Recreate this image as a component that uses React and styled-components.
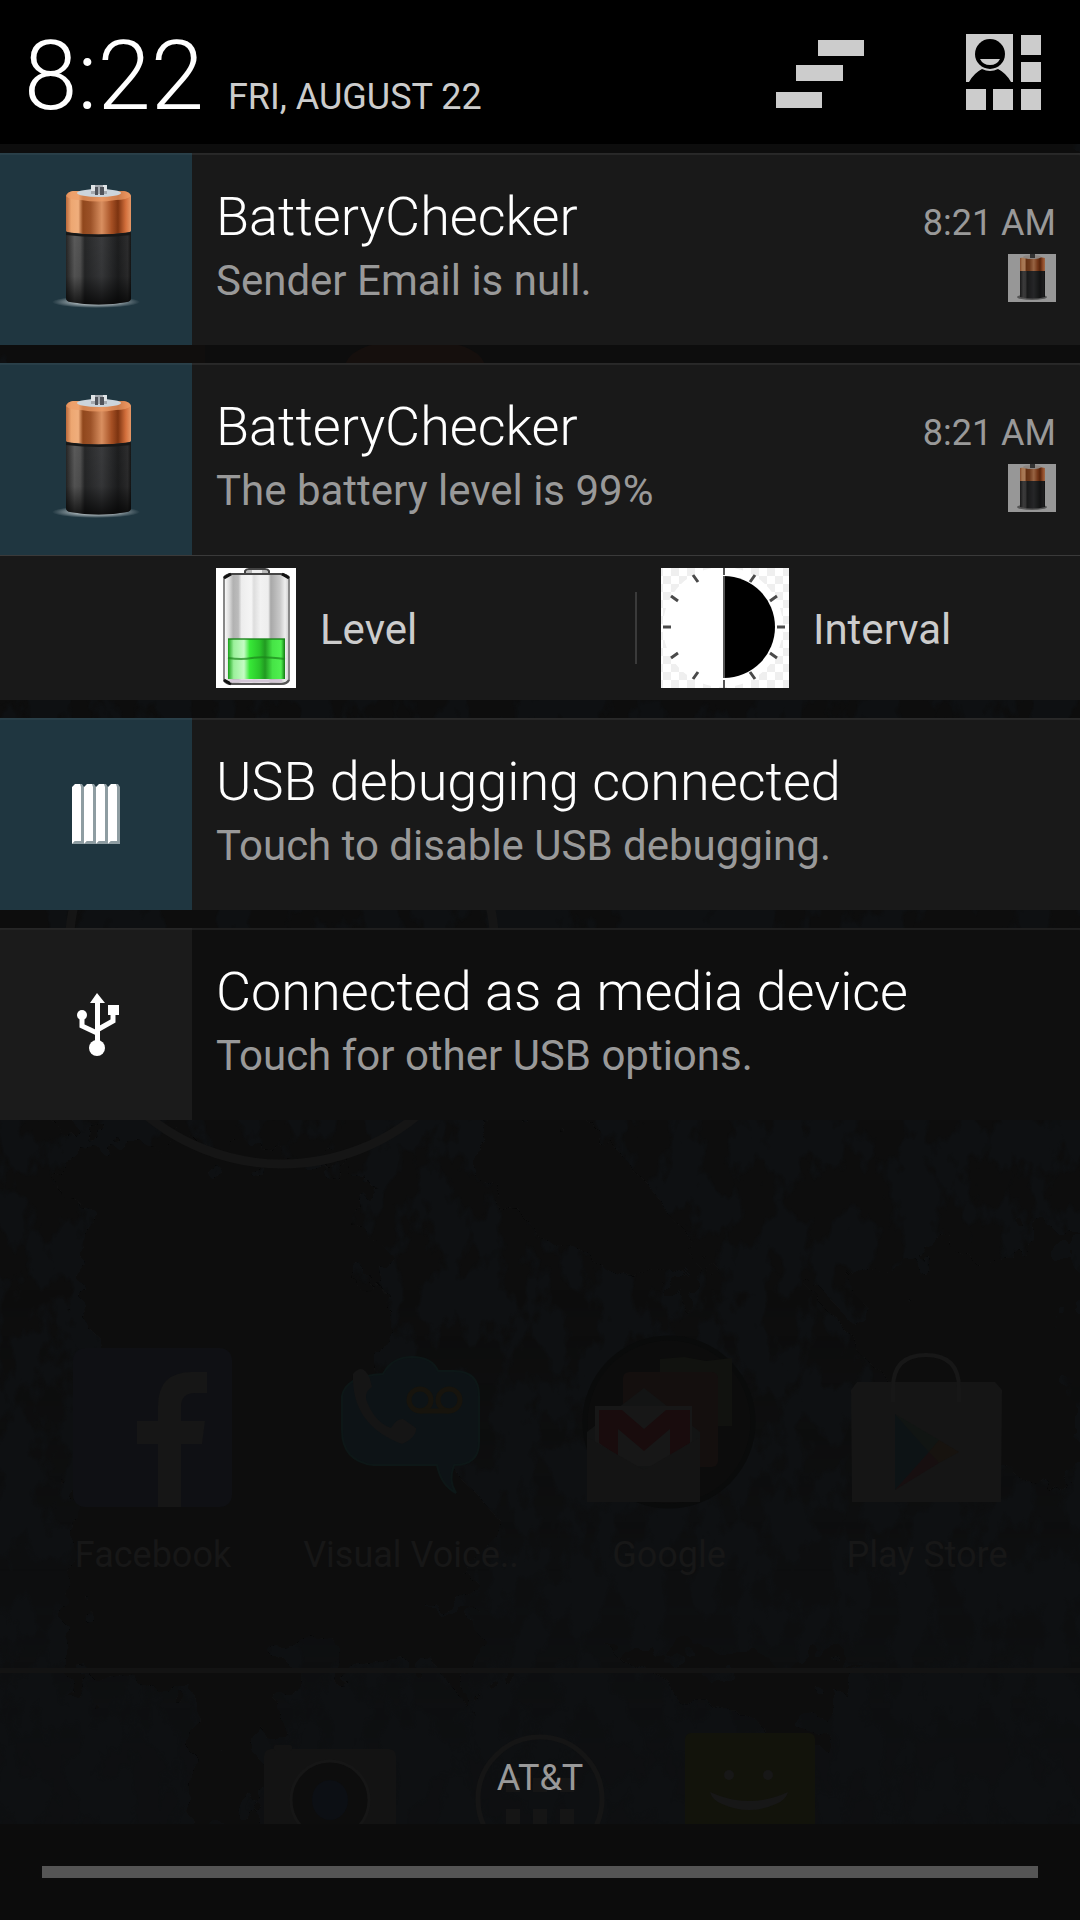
import React from "react";
import styled, { createGlobalStyle } from "styled-components";

const GlobalStyle = createGlobalStyle`
  *, *::before, *::after { box-sizing: border-box; }
  body {
    margin: 0;
    background: #0d0e0f;
    color: #fff;
    font-family: Roboto, "Noto Sans", sans-serif;
  }
  button { border: 0; background: none; color: inherit; font: inherit; cursor: pointer; }
  h2, p, ul { margin: 0; padding: 0; }
  svg { display: block; flex: none; }
`;

const Screen = styled.div`
  display: grid;
  min-height: 100vh;
  overflow: hidden;
`;

/* ---------- home screen, dimmed behind the shade ---------- */

const Home = styled.div`
  grid-area: 1 / 1;
  position: relative;
  display: flex;
  flex-direction: column;
  justify-content: flex-end;
  padding-bottom: 96px;
  background: #0e1012;
`;

const WallpaperArt = styled.svg`
  position: absolute;
  inset: 0;
  width: 100%;
  height: 100%;
`;

const AppGrid = styled.ul`
  position: relative;
  display: grid;
  grid-template-columns: repeat(4, 1fr);
  padding: 0 24px 92px;
  list-style: none;
`;

const AppCell = styled.li`
  display: flex;
  flex-direction: column;
  align-items: center;
  gap: 24px;
  color: #171717;
  font-size: 36px;
  line-height: 42px;
  white-space: nowrap;
`;

const Dock = styled.div`
  position: relative;
  display: grid;
  grid-template-columns: repeat(5, 1fr);
  justify-items: center;
  height: 156px;
  padding: 60px 16px 0;
  border-top: 5px solid #131313;
  overflow: hidden;

  & > :first-child { grid-column-start: 2; }
`;

/* ---------- notification shade ---------- */

const Shade = styled.main`
  grid-area: 1 / 1;
  position: relative;
  display: flex;
  flex-direction: column;
`;

const Header = styled.header`
  display: flex;
  align-items: stretch;
  height: 144px;
  background: #000;
`;

const DateTime = styled.div`
  flex: 1;
  display: flex;
  align-items: baseline;
  gap: 24px;
  padding: 20px 0 0 24px;
`;

const Clock = styled.time`
  font-size: 96px;
  font-weight: 300;
  line-height: 112px;
`;

const DateText = styled.span`
  color: #ccc;
  font-size: 36px;
  line-height: 42px;
`;

const HeaderButton = styled.button`
  display: flex;
  align-items: center;
  padding: 0 ${(p) => p.$pad}px;
`;

const List = styled.ul`
  display: flex;
  flex-direction: column;
  gap: 18px;
  padding-top: 9px;
  list-style: none;
`;

const Card = styled.li`
  background: ${(p) => (p.$ongoing ? "#0f0f0f" : "#191919")};
`;

const CardMain = styled.div`
  display: grid;
  grid-template-columns: 192px 1fr;
  height: 192px;
  box-shadow: inset 0 2px 1px rgba(255, 255, 255, 0.07);
`;

const IconCell = styled.div`
  display: flex;
  align-items: center;
  justify-content: center;
  background: ${(p) => (p.$ongoing ? "#1b1b1b" : "#1f3640")};
  box-shadow: inset 0 2px 1px rgba(255, 255, 255, 0.05);
`;

const CardText = styled.div`
  display: grid;
  grid-template-columns: 1fr auto;
  align-content: start;
  row-gap: 6px;
  padding: 33px 24px 0;
`;

const Title = styled.h2`
  font-size: 54px;
  font-weight: 300;
  line-height: 62px;
`;

const Time = styled.time`
  color: #999;
  font-size: 36px;
  line-height: 42px;
`;

const TitleLine = styled.div`
  grid-column: 1 / -1;
  display: flex;
  align-items: baseline;
  justify-content: space-between;
`;

const Message = styled.p`
  color: #999;
  font-size: 42px;
  line-height: 54px;
`;

const Actions = styled.div`
  display: flex;
  align-items: center;
  height: 145px;
  padding-left: 192px;
  border-top: 1px solid #3a3a3a;
`;

const ActionButton = styled.button`
  flex: 1 1 0;
  display: flex;
  align-items: center;
  gap: 24px;
  height: 144px;
  padding: 0 24px;
`;

const ActionLabel = styled.span`
  padding-top: 3px;
  color: #ccc;
  font-size: 42px;
  line-height: 54px;
`;

const Divider = styled.span`
  width: 2px;
  height: 72px;
  background: #3a3a3a;
`;

const Footer = styled.footer`
  margin-top: auto;
`;

const Carrier = styled.p`
  padding-bottom: 25px;
  color: #999;
  font-size: 36px;
  line-height: 42px;
  text-align: center;
`;

const HandleArea = styled.div`
  display: flex;
  align-items: center;
  height: 96px;
  padding: 0 42px;
  background: #0c0c0c;
`;

const Handle = styled.button`
  flex: 1;
  height: 12px;
  padding: 0;
  background: #555;
`;

/* ---------- drawings ---------- */

const HiddenDefs = styled.svg`
  position: absolute;
`;

const Gradients = () => (
  <HiddenDefs width="0" height="0" aria-hidden="true">
    <defs>
      <linearGradient id="copper">
        <stop offset="0" stopColor="#b9683a" />
        <stop offset="0.08" stopColor="#eda772" />
        <stop offset="0.19" stopColor="#f0ae7c" />
        <stop offset="0.26" stopColor="#90471c" />
        <stop offset="0.38" stopColor="#9c5228" />
        <stop offset="0.55" stopColor="#d98f60" />
        <stop offset="0.7" stopColor="#a65024" />
        <stop offset="0.8" stopColor="#7c3310" />
        <stop offset="0.92" stopColor="#d36f3c" />
        <stop offset="1" stopColor="#e59766" />
      </linearGradient>
      <linearGradient id="coal">
        <stop offset="0" stopColor="#252525" />
        <stop offset="0.13" stopColor="#5a5a5a" />
        <stop offset="0.22" stopColor="#525252" />
        <stop offset="0.29" stopColor="#262728" />
        <stop offset="0.55" stopColor="#3a3b3d" />
        <stop offset="0.8" stopColor="#1d1e1f" />
        <stop offset="0.95" stopColor="#2d2d2e" />
        <stop offset="1" stopColor="#151515" />
      </linearGradient>
      <linearGradient id="fade" x2="0" y2="1">
        <stop offset="0" stopColor="#000" stopOpacity="0" />
        <stop offset="0.6" stopColor="#000" stopOpacity="0.1" />
        <stop offset="1" stopColor="#000" stopOpacity="0.75" />
      </linearGradient>
      <radialGradient id="glow">
        <stop offset="0.5" stopColor="#9aa6ab" />
        <stop offset="1" stopColor="#9aa6ab" stopOpacity="0" />
      </radialGradient>
      <linearGradient id="silver">
        <stop offset="0" stopColor="#fff" />
        <stop offset="0.08" stopColor="#ddd" />
        <stop offset="0.14" stopColor="#b2b2b2" />
        <stop offset="0.22" stopColor="#bbb" />
        <stop offset="0.27" stopColor="#ededed" />
        <stop offset="0.42" stopColor="#f5f5f5" />
        <stop offset="0.46" stopColor="#ddd" />
        <stop offset="0.56" stopColor="#f2f2f2" />
        <stop offset="0.68" stopColor="#eee" />
        <stop offset="0.72" stopColor="#a8a8a8" />
        <stop offset="0.86" stopColor="#c8c8c8" />
        <stop offset="0.94" stopColor="#eee" />
        <stop offset="1" stopColor="#ccc" />
      </linearGradient>
      <linearGradient id="charge">
        <stop offset="0" stopColor="#17a117" />
        <stop offset="0.1" stopColor="#9bf09b" />
        <stop offset="0.28" stopColor="#c4fcc4" />
        <stop offset="0.38" stopColor="#37e837" />
        <stop offset="0.55" stopColor="#2bc62b" />
        <stop offset="0.65" stopColor="#219a21" />
        <stop offset="0.78" stopColor="#46e446" />
        <stop offset="0.93" stopColor="#4ff04f" />
        <stop offset="1" stopColor="#117811" />
      </linearGradient>
      <pattern id="checker" width="16" height="16" patternUnits="userSpaceOnUse">
        <rect width="16" height="16" fill="#fff" />
        <path d="M2 8h8v8H2zM10 0h6v8h-6zM0 0h2v8H0z" fill="#efefef" />
      </pattern>
    </defs>
  </HiddenDefs>
);

const BatteryIcon = () => (
  <svg width="96" height="128" viewBox="0 0 96 128" aria-hidden="true">
    <ellipse cx="48" cy="117" rx="44" ry="6" fill="url(#glow)" />
    <path d="M18 49h65v64q0 3-4 4q-28 5-57 0q-4-1-4-4z" fill="url(#coal)" />
    <path d="M18 49h65v64q0 3-4 4q-28 5-57 0q-4-1-4-4z" fill="url(#fade)" />
    <path d="M18 11q1-4 7-5h51q6 1 7 5v35q-2 2-8 2q-25 3-49 0q-6 0-8-2z" fill="url(#copper)" />
    <path d="M18 47q32 5 65 0v3q-32 4-65 0z" fill="#171717" />
    <path d="M18 11q1-4 7-5h51q6 1 7 5q-4 4-15 4q-18 3-35 0q-12 0-15-4z" fill="#ee9c66" opacity="0.7" />
    <ellipse cx="51" cy="8" rx="22" ry="4" fill="#ccd5dc" />
    <path d="M43 0h16v9H43z" fill="#a5aab0" />
    <path d="M43 0h4v6h-4zM55 0h4v6h-4z" fill="#dfe3e6" />
    <path d="M47 2h3v8h-3zM52 2h4v8h-4z" fill="#50545b" />
  </svg>
);

const BatteryBadge = () => (
  <svg width="48" height="48" viewBox="0 0 48 48" aria-hidden="true">
    <rect width="48" height="48" fill="#979797" />
    <ellipse cx="24" cy="43" rx="15" ry="3" fill="#555" />
    <path d="M12 17h25v26q-12 3-25 0z" fill="url(#coal)" />
    <path d="M12 17h25v26q-12 3-25 0z" fill="#000" opacity="0.35" />
    <path d="M12 4q12-3 25 0v13H12z" fill="url(#copper)" />
    <path d="M12 4q12-3 25 0v13H12z" fill="#000" opacity="0.3" />
    <ellipse cx="24" cy="3" rx="9" ry="2" fill="#8d8580" />
    <path d="M22 0h5v4h-5z" fill="#333" />
  </svg>
);

const LevelIcon = () => (
  <svg width="80" height="120" viewBox="0 0 80 120" aria-hidden="true">
    <rect width="80" height="120" fill="#fff" />
    <path d="M29 6V3q1-2 4-2h16q3 0 4 2v3z" fill="#bbb" stroke="#444" strokeWidth="2" />
    <path d="M36 2h10v4H36z" fill="#eee" />
    <path d="M8 10q2-4 8-4h48q7 0 9 4v102q-2 4-8 4H16q-6 0-8-4z" fill="url(#silver)" stroke="#888" strokeWidth="2" />
    <path d="M8 10q2-4 8-4h48q7 0 9 4" fill="none" stroke="#444" strokeWidth="2" />
    <path d="M8 112q2 4 8 4h48q7 0 9-4" fill="none" stroke="#555" strokeWidth="2" />
    <path d="M8 10l7-4M73 10l-7-4M8 112l7 4" stroke="#111" strokeWidth="3" />
    <path d="M12 71h57v40H12z" fill="url(#charge)" />
    <path d="M12 71h57M12 90q14 2 24 0t33 1" fill="none" stroke="#1b851b" strokeWidth="2" strokeOpacity="0.7" />
    <path d="M14 113h52" stroke="#d3c6d6" strokeWidth="3" />
  </svg>
);

const IntervalIcon = () => (
  <svg width="128" height="120" viewBox="0 0 128 120" aria-hidden="true">
    <rect width="128" height="120" fill="url(#checker)" />
    <circle cx="62" cy="59" r="60" fill="#fff" />
    <path d="M63 8a51 51 0 0 1 0 102z" fill="#000" />
    <path d="M63 0v7M63 112v8M63 8v102" stroke="#555" strokeWidth="2" />
    <path
      d="M32 7l5 7M94 7l-5 7M10 28l7 5M116 28l-7 5M2 59h8M116 59h8M10 90l7-5M116 90l-7-5M32 111l5-7M94 111l-5-7"
      stroke="#4a4a4a"
      strokeWidth="3"
    />
  </svg>
);

const DebugIcon = () => (
  <svg width="48" height="60" viewBox="0 0 48 60" aria-hidden="true">
    {[0, 12, 24, 36].map((x) => (
      <g key={x} transform={`translate(${x} 0)`}>
        <path d="M8 0h2l2 3v57H0l3-3h6z" fill="#8e9da2" />
        <path d="M0 3l3-3h5l1 3v54H3l-3 3z" fill="#fff" />
      </g>
    ))}
  </svg>
);

const UsbIcon = () => (
  <svg width="48" height="64" viewBox="0 0 48 64" fill="#fff" aria-hidden="true">
    <path d="M25 1l8 10h-5v38h-5V11h-5z" />
    <circle cx="25" cy="56" r="8" />
    <circle cx="10" cy="23" r="5" />
    <path d="M36 13h11v10H36z" />
    <path d="M10 25v9l15 7M41 21v8l-16 9" fill="none" stroke="#fff" strokeWidth="5" />
  </svg>
);

const ClearIcon = () => (
  <svg width="88" height="72" viewBox="0 -4 88 72" fill="#ccc" aria-hidden="true">
    <path d="M42 0h46v16H42zM20 25h47v16H20zM0 52h46v16H0z" />
  </svg>
);

const QuickSettingsIcon = () => (
  <svg width="76" height="76" viewBox="0 0 76 76" fill="#ccc" aria-hidden="true">
    <path d="M0 0h47v48H0z" />
    <path d="M55 1h20v20H55zM55 28h20v20H55zM0 55h20v21H0zM27 55h20v21H27zM55 55h20v21H55z" />
    <path d="M3 48q5-9 13-13q8 4 16 0q8 4 13 13z" fill="#000" />
    <circle cx="24" cy="20" r="15" fill="#000" />
    <path d="M14 25h20q-3 6-10 6t-10-6z" />
  </svg>
);

const FacebookIcon = () => (
  <svg width="176" height="176" viewBox="0 0 176 176" aria-hidden="true">
    <rect x="8" y="14" width="159" height="159" rx="12" fill="#0f1014" />
    <path d="M93 173v-63H72V87h21V72q0-34 34-34h15v21h-12q-14 0-14 14v14h24l-3 23h-21v63z" fill="#161616" />
  </svg>
);

const VoicemailIcon = () => (
  <svg width="176" height="176" viewBox="0 0 176 176" aria-hidden="true">
    <path
      d="M60 40q9-17 29-17t26 14h16q25 0 25 25v46q0 23-25 23q-6 16 2 28q-15-8-19-28H50q-31-4-31-35V62q4-20 41-22z"
      fill="#0d1316"
      stroke="#0d1717"
      strokeWidth="2"
    />
    <path d="M30 40q10-12 17 5l2 8q-7 4-6 12q8 23 25 29q6-10 12-9l13 9q1 9-14 16Q28 91 30 40z" fill="#151515" />
    <g fill="none" stroke="#17140d" strokeWidth="5">
      <circle cx="97" cy="66" r="11" />
      <circle cx="126" cy="66" r="11" />
      <path d="M97 77h29" />
    </g>
  </svg>
);

const GoogleFolderIcon = () => (
  <svg width="176" height="176" viewBox="0 0 176 176" aria-hidden="true">
    <circle cx="88" cy="88" r="84" fill="#0c0c0c" stroke="#0a0b0b" strokeWidth="5" />
    <path d="M79 25l24-2 22 4 26-3v68H79z" fill="#11120f" />
    <rect x="42" y="38" width="95" height="95" rx="6" fill="#140f0e" />
    <path d="M6 98l57-44 56 44v70H6z" fill="#131414" />
    <path d="M14 72h97v60H14z" fill="#171717" />
    <path d="M18 76h23l22 19 22-19h24v33l-20 13V95l-26 22-26-22v27l-19-13z" fill="#190c0d" />
    <path d="M6 103l57 33 56-33v65H6z" fill="#141414" />
  </svg>
);

const PlayStoreIcon = () => (
  <svg width="176" height="176" viewBox="0 0 176 176" aria-hidden="true">
    <path d="M18 48h138l7 8-1 112H13l-1-112z" fill="#151515" />
    <path d="M54 68V54q0-33 33-33t33 33v14" fill="none" stroke="#171717" strokeWidth="4" />
    <path d="M56 80v76l34-38z" fill="#0d1315" />
    <path d="M56 80l34 38 10-12z" fill="#111513" />
    <path d="M100 106l20 12-20 11-10-11z" fill="#17130f" />
    <path d="M56 156l34-38 10 11z" fill="#170f10" />
  </svg>
);

const CameraIcon = () => (
  <svg width="132" height="132" viewBox="0 0 132 132" aria-hidden="true">
    <rect y="16" width="132" height="116" rx="7" fill="#131313" />
    <rect x="10" y="12" width="18" height="6" rx="2" fill="#131313" />
    <circle cx="66" cy="67" r="39" fill="#0d0d0d" stroke="#161616" strokeWidth="3" />
    <ellipse cx="66" cy="67" rx="18" ry="20" fill="#0c0f14" />
  </svg>
);

const AllAppsIcon = () => (
  <svg width="132" height="132" viewBox="0 0 132 132" aria-hidden="true">
    <circle cx="66" cy="66" r="62" fill="none" stroke="#151515" strokeWidth="5" />
    <path
      d="M32 45h14v14H32zM59 45h14v14H59zM86 45h14v14H86zM32 76h14v20H32zM59 76h14v20H59zM86 76h14v20H86z"
      fill="#151515"
    />
  </svg>
);

const MessagesIcon = () => (
  <svg width="132" height="132" viewBox="0 0 132 132" aria-hidden="true">
    <rect x="1" y="0" width="130" height="132" rx="6" fill="#12130b" />
    <ellipse cx="45" cy="42" rx="5" ry="5" fill="#171717" />
    <ellipse cx="84" cy="42" rx="5" ry="5" fill="#171717" />
    <path d="M26 59q39 18 78 0q-2 8-12 12-27 12-54 0-10-4-12-12z" fill="#171717" />
  </svg>
);

const Wallpaper = () => (
  <WallpaperArt viewBox="0 0 1080 1920" preserveAspectRatio="xMidYMax slice" aria-hidden="true">
    <defs>
      <filter id="leaves" x="0" y="0" width="100%" height="100%" colorInterpolationFilters="sRGB">
        <feTurbulence type="fractalNoise" baseFrequency="0.03 0.018" numOctaves="4" seed="8" />
        <feColorMatrix values="0 0 0 0 0.05  0 0 0 0 0.05  0 0 0 0 0.05  10 0 0 0 -4.7" result="n" />
        <feComposite in="n" in2="SourceGraphic" operator="in" />
      </filter>
      <filter id="soften" x="-20%" y="-20%" width="140%" height="140%">
        <feTurbulence type="fractalNoise" baseFrequency="0.03" numOctaves="3" seed="3" />
        <feDisplacementMap in="SourceGraphic" scale="90" />
      </filter>
      <linearGradient id="canopy" x2="0" y2="1">
        <stop offset="0.7" stopColor="#000" />
        <stop offset="0.96" stopColor="#000" stopOpacity="0.2" />
      </linearGradient>
    </defs>
    <rect width="1080" height="1824" fill="url(#canopy)" filter="url(#leaves)" />
    <g fill="#0d0d0d" filter="url(#soften)">
      <path d="M0 0h1080v620H0zM60 1130l300 40 30 230 110 120-80 130-360 40 40-290zM470 1110l130 20 110 130-60 30-150-80zM900 1260l180-30v260l-160-60-90-120z" />
      <path d="M180 1640h120l-60 190h-50zM400 1620l70 90 20-90zM620 1660l180 90 60-90z" />
    </g>
    <circle cx="282" cy="951" r="213" fill="none" stroke="#151515" strokeWidth="9" />
    <path d="M100 340h105v24H100z" fill="#120f0d" opacity="0.6" />
    <path d="M345 364q10-24 70-24t70 24z" fill="#150f0d" />
  </WallpaperArt>
);

/* ---------- content ---------- */

const apps = [
  { name: "Facebook", Icon: FacebookIcon },
  { name: "Visual Voice..", Icon: VoicemailIcon },
  { name: "Google", Icon: GoogleFolderIcon },
  { name: "Play Store", Icon: PlayStoreIcon },
];

const notifications = [
  { title: "BatteryChecker", text: "Sender Email is null.", time: "8:21 AM", Icon: BatteryIcon },
  {
    title: "BatteryChecker",
    text: "The battery level is 99%",
    time: "8:21 AM",
    Icon: BatteryIcon,
    actions: true,
  },
  { title: "USB debugging connected", text: "Touch to disable USB debugging.", Icon: DebugIcon },
  {
    title: "Connected as a media device",
    text: "Touch for other USB options.",
    Icon: UsbIcon,
    ongoing: true,
  },
];

const Notification = ({ title, text, time, Icon, actions, ongoing }) => (
  <Card $ongoing={ongoing}>
    <CardMain>
      <IconCell $ongoing={ongoing}>
        <Icon />
      </IconCell>
      <CardText>
        <TitleLine>
          <Title>{title}</Title>
          {time && <Time>{time}</Time>}
        </TitleLine>
        <Message>{text}</Message>
        {time && <BatteryBadge />}
      </CardText>
    </CardMain>
    {actions && (
      <Actions>
        <ActionButton type="button">
          <LevelIcon />
          <ActionLabel>Level</ActionLabel>
        </ActionButton>
        <Divider />
        <ActionButton type="button">
          <IntervalIcon />
          <ActionLabel>Interval</ActionLabel>
        </ActionButton>
      </Actions>
    )}
  </Card>
);

export default function App() {
  return (
    <Screen>
      <GlobalStyle />
      <Gradients />
      <Home>
        <Wallpaper />
        <AppGrid>
          {apps.map(({ name, Icon }) => (
            <AppCell key={name}>
              <Icon />
              {name}
            </AppCell>
          ))}
        </AppGrid>
        <Dock>
          <CameraIcon />
          <AllAppsIcon />
          <MessagesIcon />
        </Dock>
      </Home>
      <Shade>
        <Header>
          <DateTime>
            <Clock>8:22</Clock>
            <DateText>FRI, AUGUST 22</DateText>
          </DateTime>
          <HeaderButton type="button" $pad={64} aria-label="Clear all notifications">
            <ClearIcon />
          </HeaderButton>
          <HeaderButton type="button" $pad={38} aria-label="Quick settings">
            <QuickSettingsIcon />
          </HeaderButton>
        </Header>
        <List>
          {notifications.map((n) => (
            <Notification key={n.text} {...n} />
          ))}
        </List>
        <Footer>
          <Carrier>AT&amp;T</Carrier>
          <HandleArea>
            <Handle type="button" aria-label="Close notifications" />
          </HandleArea>
        </Footer>
      </Shade>
    </Screen>
  );
}
